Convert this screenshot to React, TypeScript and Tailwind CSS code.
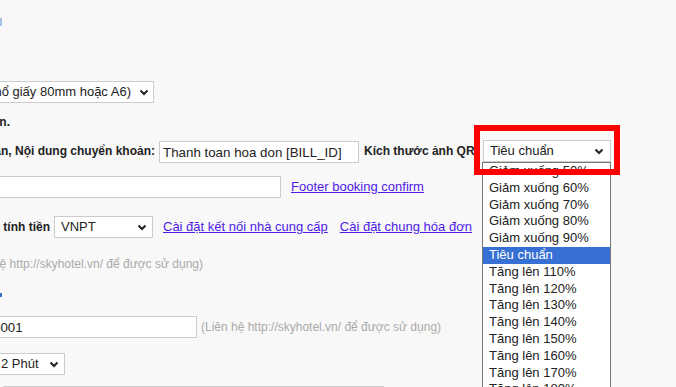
import React from "react";

const Chevron = () => (
  <svg width="10" height="7" viewBox="0 0 10 7" className="shrink-0">
    <polyline points="1.5,1.5 5,5 8.5,1.5" fill="none" stroke="#222" strokeWidth="2" />
  </svg>
);

const FakeSelect = ({ text, className = "" }: { text: string; className?: string }) => (
  <div
    className={`h-[22px] shrink-0 border border-[#ccc] bg-white flex items-center justify-between pl-[6px] pr-[4px] gap-[8px] whitespace-nowrap ${className}`}
  >
    <span>{text}</span>
    <Chevron />
  </div>
);

// clipped at the left edge of the window, content aligned to its right end
const Clip = ({ w, children }: { w: string; children: React.ReactNode }) => (
  <div className={`${w} shrink-0 overflow-hidden flex justify-end items-center whitespace-nowrap`}>{children}</div>
);

const qrOptions = [
  "Giảm xuống 50%",
  "Giảm xuống 60%",
  "Giảm xuống 70%",
  "Giảm xuống 80%",
  "Giảm xuống 90%",
  "Tiêu chuẩn",
  "Tăng lên 110%",
  "Tăng lên 120%",
  "Tăng lên 130%",
  "Tăng lên 140%",
  "Tăng lên 150%",
  "Tăng lên 160%",
  "Tăng lên 170%",
  "Tăng lên 180%",
  "Tăng lên 190%",
  "Tăng lên 200%",
];

export default function App() {
  return (
    <div className="relative w-[676px] h-[387px] overflow-hidden bg-[#f8f8f8] font-['Liberation_Sans',Arial,sans-serif] text-[13px] text-[#222]">
      <div className="flex flex-col">
        {/* clipped link fragment */}
        <div className="mt-[18px] h-[8px] w-[2px] bg-[#a9c0e4]" />

        {/* print template */}
        <div className="mt-[55px] flex">
          <Clip w="w-[154px]">
            <FakeSelect text="Hóa đơn nhỏ (khổ giấy 80mm hoặc A6)" />
          </Clip>
        </div>

        <div className="mt-[11px] h-[16px] leading-[16px] flex font-bold text-[12px]">
          <Clip w="w-[10px]">
            <span>Vui lòng liên hệ quản trị viên.</span>
          </Clip>
        </div>

        {/* bank transfer content + QR size */}
        <div className="mt-[10px] h-[23px] flex items-start">
          <Clip w="w-[155px]">
            <span className="font-bold text-[12px] leading-[23px]">Số tài khoản, Tên chủ tài khoản, Nội dung chuyển khoản:</span>
          </Clip>
          <input
            readOnly
            value="Thanh toan hoa don [BILL_ID]"
            className="ml-[4px] mt-[1px] w-[200px] h-[22px] shrink-0 border border-[#ccc] bg-white px-[3px] text-[13.33px] text-[#222] outline-none"
          />
          <span className="ml-[5px] w-[119px] shrink-0 font-bold text-[12px] leading-[23px] whitespace-nowrap">Kích thước ảnh QR</span>
          <FakeSelect text="Tiêu chuẩn" className="w-[128px] pr-[6px]" />
        </div>

        {/* footer */}
        <div className="mt-[13px] h-[22px] flex items-center">
          <Clip w="w-[281px]">
            <input readOnly className="w-[320px] h-[22px] shrink-0 border border-[#ccc] bg-white px-[3px] outline-none" />
          </Clip>
          <a className="ml-[10px] text-[#4f1ae8] underline whitespace-nowrap cursor-pointer">Footer booking confirm</a>
        </div>

        {/* invoice provider */}
        <div className="mt-[18px] h-[22px] flex items-center">
          <Clip w="w-[50px]">
            <span className="font-bold text-[12px]">Hóa đơn điện tử máy tính tiền</span>
          </Clip>
          <FakeSelect text="VNPT" className="ml-[4px] w-[99px] pr-[5px]" />
          <a className="ml-[10px] text-[#4f1ae8] underline whitespace-nowrap cursor-pointer">Cài đặt kết nối nhà cung cấp</a>
          <a className="ml-[12px] text-[#4f1ae8] underline whitespace-nowrap cursor-pointer">Cài đặt chung hóa đơn</a>
        </div>

        <div className="mt-[18px] h-[16px] leading-[16px] flex text-[12px] text-[#aaa]">
          <Clip w="w-[203px]">
            <span>(Liên hệ http://skyhotel.vn/ để được sử dụng)</span>
          </Clip>
        </div>

        {/* clipped label fragment */}
        <div className="mt-[21px] h-[4px] w-[2px] bg-[#3b6fc4]" />

        <div className="mt-[19px] h-[22px] flex items-center">
          <Clip w="w-[197px]">
            <input
              readOnly
              value="0001"
              className="w-[208px] h-[22px] shrink-0 border border-[#ccc] bg-white px-[3px] text-[13.33px] text-[#222] outline-none"
            />
          </Clip>
          <span className="ml-[4px] text-[12px] text-[#aaa] whitespace-nowrap">(Liên hệ http://skyhotel.vn/ để được sử dụng)</span>
        </div>

        <div className="mt-[15px] h-[22px] flex items-center">
          <Clip w="w-[65px]">
            <FakeSelect text="2 Phút" className="w-[71px] pr-[5px]" />
          </Clip>
        </div>

        <div className="mt-[11px] ml-[3px] w-[381px] h-[22px] border border-[#ccc] bg-white" />
      </div>

      {/* open dropdown list */}
      <div className="absolute left-[482px] top-[162px] w-[129px] h-[240px] border border-[#767676] bg-white overflow-hidden">
        {qrOptions.map((o, i) => (
          <div
            key={o}
            className={`h-[16.8px] leading-[16.8px] pl-[6px] whitespace-nowrap ${
              i === 5 ? "bg-[#3670d4] text-white" : "text-[#222]"
            }`}
          >
            {o}
          </div>
        ))}
      </div>

      {/* red highlight */}
      <div className="absolute left-[474px] top-[125px] w-[146px] h-[50px] border-[6px] border-[#ff0000]" />
    </div>
  );
}
